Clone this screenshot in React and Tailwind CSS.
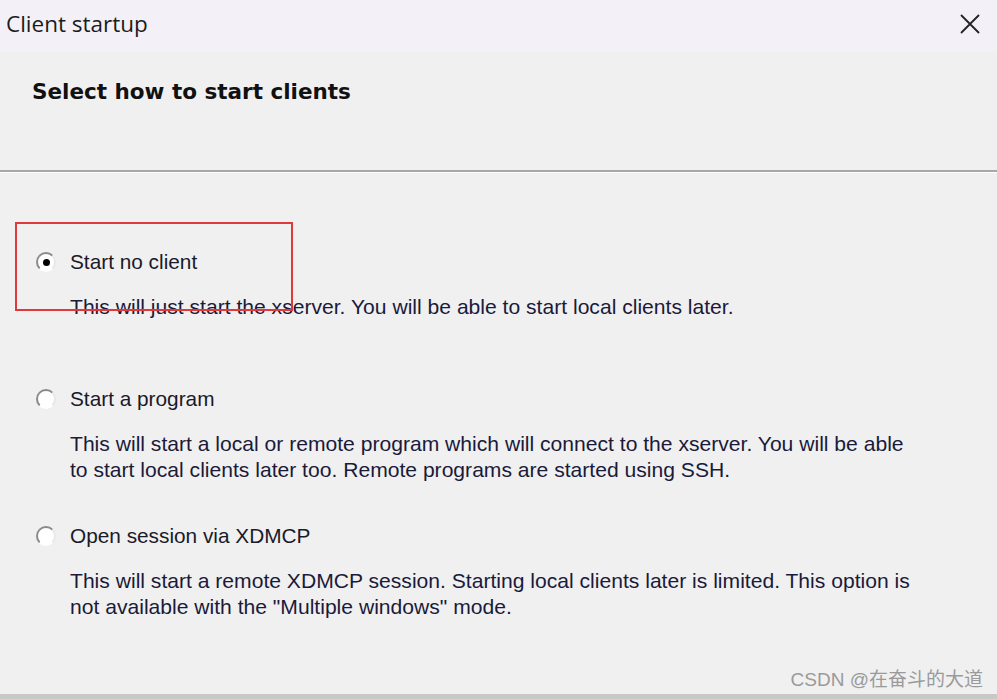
import React from "react";

function Radio({ checked }) {
  return (
    <span className="relative flex h-[20px] w-[20px] shrink-0 items-center justify-center rounded-full border-2 border-t-[#8a8a8a] border-l-[#8a8a8a] border-r-[#e8e8e8] border-b-[#ffffff] bg-white">
      {checked && <span className="h-[7px] w-[7px] rounded-full bg-black" />}
    </span>
  );
}

export default function App() {
  const options = [
    {
      label: "Start no client",
      checked: true,
      desc: ["This will just start the xserver. You will be able to start local clients later."],
    },
    {
      label: "Start a program",
      checked: false,
      desc: [
        "This will start a local or remote program which will connect to the xserver. You will be able",
        "to start local clients later too. Remote programs are started using SSH.",
      ],
    },
    {
      label: "Open session via XDMCP",
      checked: false,
      desc: [
        "This will start a remote XDMCP session. Starting local clients later is limited. This option is",
        "not available with the \"Multiple windows\" mode.",
      ],
    },
  ];

  return (
    <div className="relative flex h-[699px] w-[997px] flex-col overflow-hidden bg-[#f0f0f0] text-[#1a1a2a]" style={{ fontFamily: "'Liberation Sans', Arial, sans-serif" }}>
      {/* Title bar */}
      <div className="flex h-[52px] shrink-0 items-center justify-between bg-[#f3f1f7] pb-[5px] pl-[6px] pr-[16px]">
        <span className="text-[22.5px] text-[#1c1c1c]" style={{ fontFamily: "'Open Sans', sans-serif" }}>Client startup</span>
        <svg width="22" height="22" viewBox="0 0 22 22" className="text-[#222]">
          <path d="M2 2 L20 20 M20 2 L2 20" stroke="currentColor" strokeWidth="1.8" />
        </svg>
      </div>

      {/* Header */}
      <div className="h-[118px] shrink-0 pl-[32px] pt-[24px]">
        <h1 className="text-[21.5px] font-bold text-[#111]" style={{ fontFamily: "'DejaVu Sans', sans-serif" }}>Select how to start clients</h1>
      </div>
      <div className="h-[2px] shrink-0 bg-[#a8a8a8]" />
      <div className="h-[1px] shrink-0 bg-white" />

      {/* Options */}
      <div className="flex flex-col pl-[36px] pt-[77px]">
        {options.map((o, i) => (
          <div key={i} className="flex h-[137px] flex-col">
            <div className="flex items-center gap-[14px]">
              <Radio checked={o.checked} />
              <span className="text-[20.8px] leading-[24px]">{o.label}</span>
            </div>
            <div className="mt-[20px] pl-[34px] text-[21.1px] leading-[26px] text-[#1a1a3a]">
              {o.desc.map((d, j) => (
                <div key={j}>{d}</div>
              ))}
            </div>
          </div>
        ))}
      </div>

      {/* Annotation box */}
      <div className="absolute left-[15px] top-[222px] h-[89px] w-[278px] border-2 border-[#e0393b]" />

      {/* Watermark */}
      <div className="absolute bottom-[5px] right-[14px] text-[19px] text-[#9a9a9a]" style={{ fontFamily: "'Liberation Sans', 'Noto Sans CJK SC', sans-serif" }}>CSDN @在奋斗的大道</div>

      <div className="absolute bottom-0 left-0 h-[5px] w-full bg-[#c8c8c8]" />
    </div>
  );
}
